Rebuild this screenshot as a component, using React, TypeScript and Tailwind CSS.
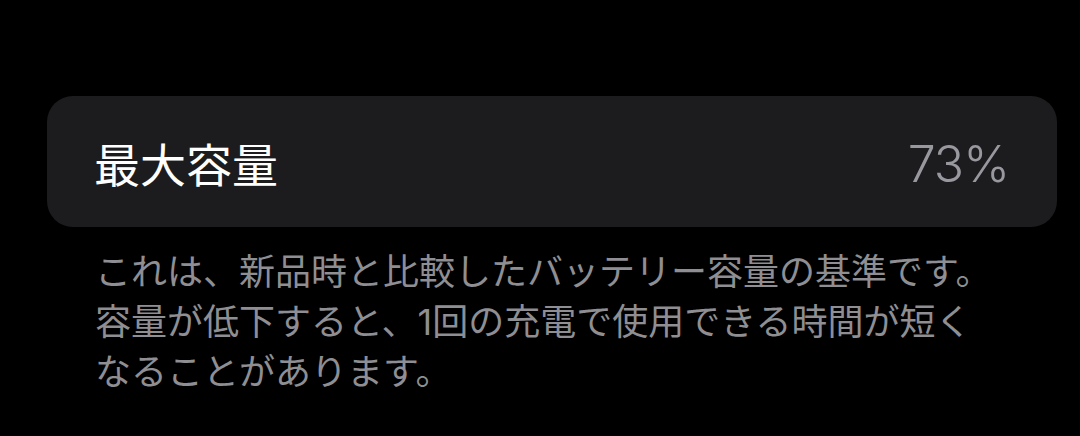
const font = { fontFamily: '"Inter", "Noto Sans CJK JP", sans-serif' };

const notes = [
  "これは、新品時と比較したバッテリー容量の基準です。",
  "容量が低下すると、1回の充電で使用できる時間が短く",
  "なることがあります。",
];

export default function App() {
  return (
    <div className="w-[1080px] h-[436px] bg-black pt-[96px] pl-[47px] pr-[23px]" style={font}>
      <div className="h-[131px] rounded-[26px] bg-[#1c1c1e] flex items-center justify-between pl-[47px] pr-[48px]">
        <span className="text-[46px] leading-none text-white pt-[6px]">最大容量</span>
        <span className="text-[50px] leading-none font-light text-[#98989f] tracking-[-1px] pt-[4px]">73%</span>
      </div>
      <div className="mt-[20px] pl-[48px] text-[36px] leading-[50px] text-[#8e8e93]">
        {notes.map((line) => (
          <div key={line} className="whitespace-nowrap">
            {line}
          </div>
        ))}
      </div>
    </div>
  );
}
